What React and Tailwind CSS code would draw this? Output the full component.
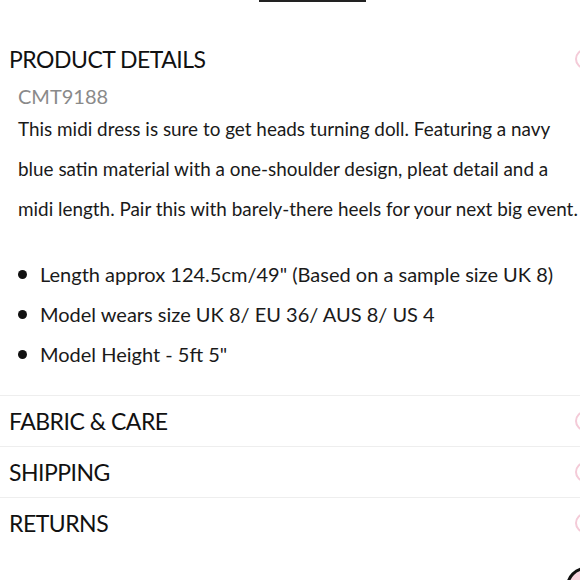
import React from 'react';

const PARAGRAPH = [
  'This midi dress is sure to get heads turning doll. Featuring a navy',
  'blue satin material with a one-shoulder design, pleat detail and a',
  'midi length. Pair this with barely-there heels for your next big event.',
];

const BULLETS = [
  'Length approx 124.5cm/49" (Based on a sample size UK 8)',
  'Model wears size UK 8/ EU 36/ AUS 8/ US 4',
  'Model Height - 5ft 5"',
];

const SECTIONS = ['FABRIC & CARE', 'SHIPPING', 'RETURNS'];

const Toggle = () => (
  <div className="w-5 h-5 shrink-0 rounded-full border-2 border-[#f4cbd8]" />
);

const App = () => {
  return (
    <div className="relative w-[580px] h-[580px] overflow-hidden bg-white font-['Lato',sans-serif] text-[#1a1a1a]">
      <div className="ml-[259px] w-[107px] h-[2px] bg-[#222]" />

      {/* Product details */}
      <div className="w-[600px] mt-[37px] h-[40px] pl-[9px] pr-[5px] flex items-center justify-between">
        <h2 className="text-[23px] tracking-[-0.5px] leading-none text-[#111] whitespace-nowrap">PRODUCT DETAILS</h2>
        <Toggle />
      </div>
      <div className="pl-[18px] mt-[3px] text-[20px] leading-[28px] text-[#8a8a8a]">CMT9188</div>

      <div className="pl-[18px] -mt-[1px] text-[18.9px] leading-[40px] whitespace-nowrap">
        {PARAGRAPH.map(l => <div key={l}>{l}</div>)}
      </div>

      <ul className="mt-[25px] text-[20px] leading-[40px] whitespace-nowrap">
        {BULLETS.map(b => (
          <li key={b} className="flex items-center">
            <span className="ml-[18px] w-[9px] h-[9px] rounded-full bg-[#111]" />
            <span className="ml-[13px]">{b}</span>
          </li>
        ))}
      </ul>

      <div className="mt-[21px]">
        {SECTIONS.map(s => (
          <div key={s} className="w-[600px] h-[51px] border-t border-[#eeeeee] pl-[9px] pr-[5px] flex items-center justify-between">
            <span className="text-[23px] tracking-[-0.5px] leading-none text-[#111] whitespace-nowrap">{s}</span>
            <Toggle />
          </div>
        ))}
      </div>

      <div className="mt-[29px] text-[24px] leading-[30px] font-bold text-[#111] whitespace-nowrap">‘Dream Bal’</div>

      <div className="absolute left-[566px] top-[567px] w-[40px] h-[40px] rounded-full border-[3px] border-[#111] bg-[#f9d5e0]" />
    </div>
  );
};

export default App;
